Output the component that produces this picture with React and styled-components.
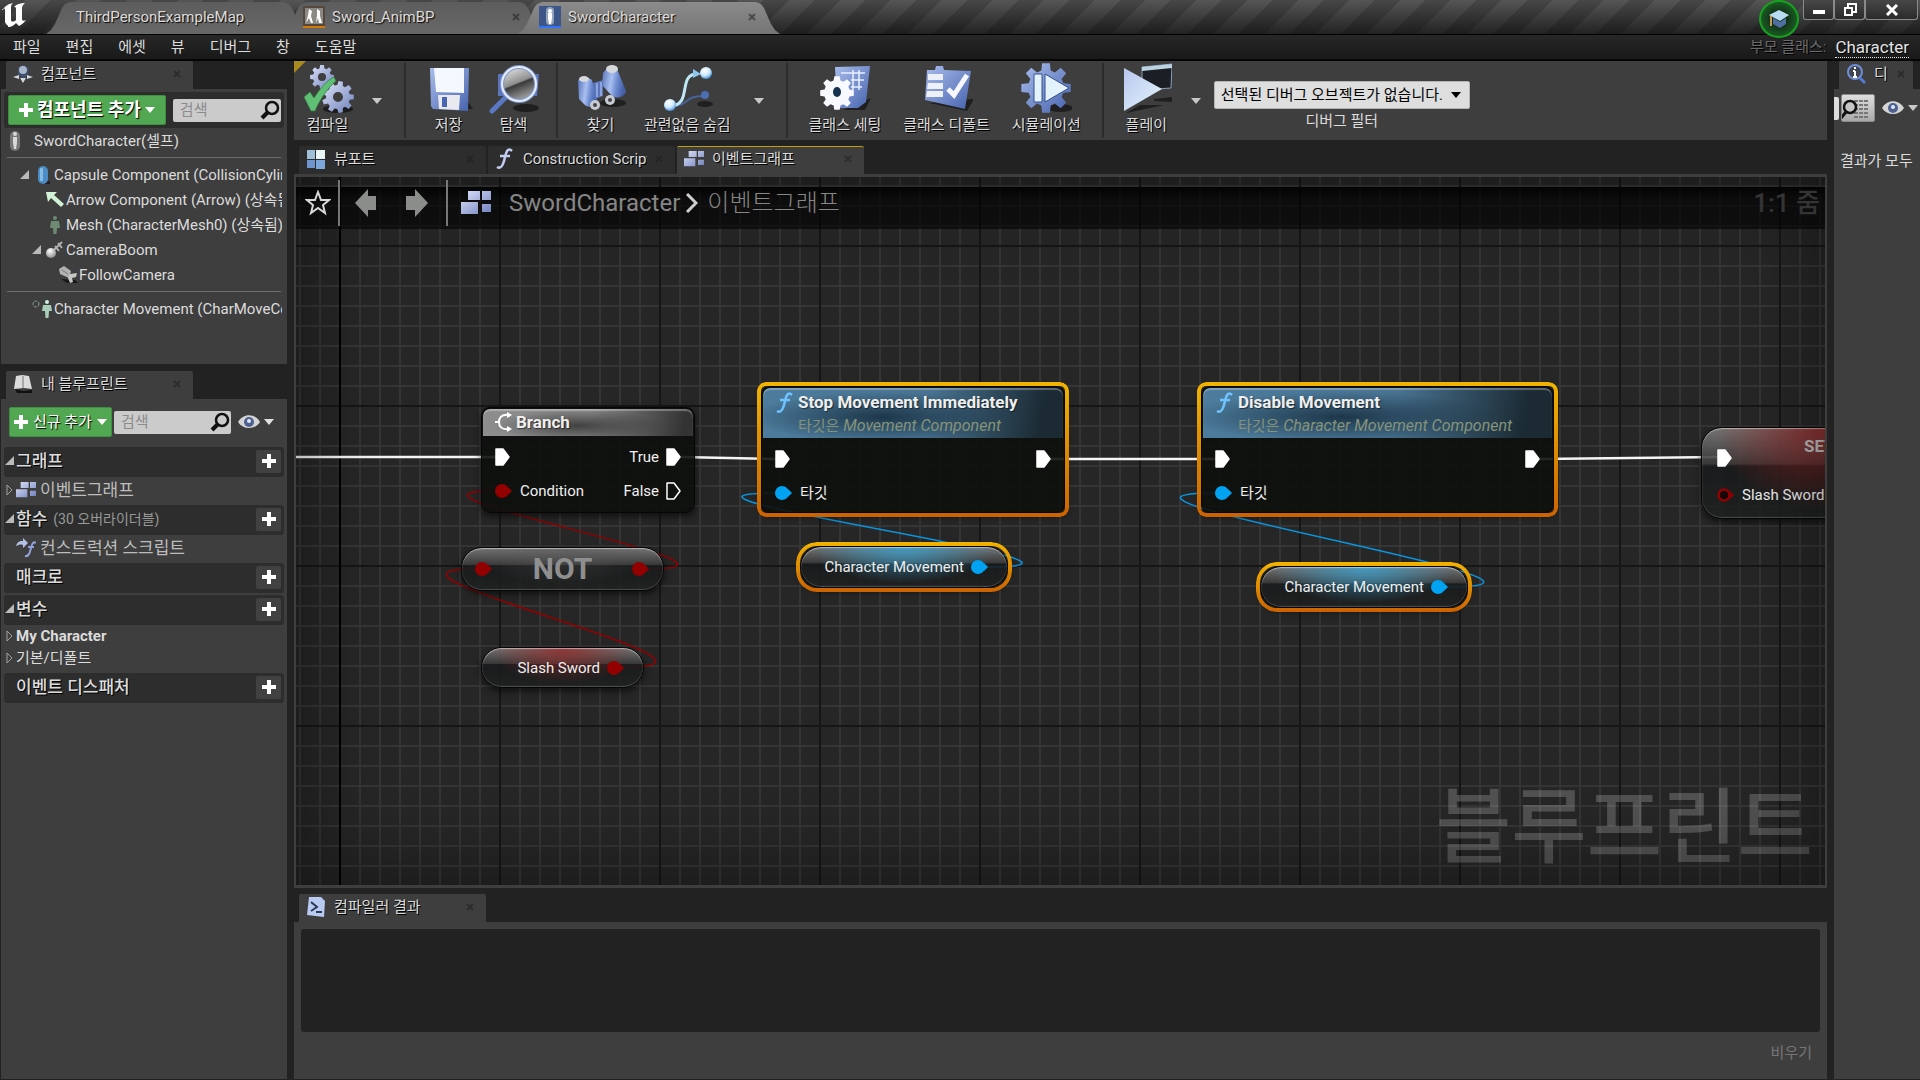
import styled, { createGlobalStyle } from "styled-components";

const GlobalStyle = createGlobalStyle`
  * {
    box-sizing: border-box;
  }

  body {
    margin: 0;
    background-color: #222222;
    color: #dcdcdc;
    font-family: Roboto, "Noto Sans CJK KR", sans-serif;
    font-size: 15px;
    line-height: 20px;
  }

  button, input, select {
    font: inherit;
    color: inherit;
    border: none;
    padding: 0;
    margin: 0;
    background: none;
  }

  svg {
    display: block;
    flex: none;
  }
`;

/* ---------- layout ---------- */

const Page = styled.div`
  height: 100vh;
  display: flex;
  flex-direction: column;
  overflow: hidden;
`;

const TitleBar = styled.header`
  height: 34px;
  flex: none;
  display: flex;
  align-items: flex-start;
  background: linear-gradient(rgba(0, 0, 0, 0), rgba(0, 0, 0, 0.6)),
    repeating-linear-gradient(135deg, #474747 0 18px, #555 18px 36px);
`;

const Logo = styled.div`
  width: 46px;
  padding: 2px 2px 0;
`;

const DocTab = styled.button`
  position: relative;
  z-index: ${(props) => props.$layer};
  width: 262px;
  height: 34px;
  margin-right: -26px;
  padding: 0 24px 0 ${(props) => (props.$plain ? 30 : 21)}px;
  display: flex;
  align-items: center;
  gap: 7px;
  text-shadow: 1px 1px 1px #000;
  background: ${(props) =>
    props.$active
      ? "linear-gradient(#8c8c8c, #757575)"
      : "linear-gradient(#5c5c5c, #686868)"};
  clip-path: polygon(
    0 100%,
    5px 30px,
    9px 24px,
    16px 8px,
    19px 4px,
    24px 2px,
    calc(100% - 24px) 2px,
    calc(100% - 19px) 4px,
    calc(100% - 16px) 8px,
    calc(100% - 9px) 24px,
    calc(100% - 5px) 30px,
    100% 100%
  );

  & > span {
    flex: 1;
    text-align: left;
  }
`;

const TitleActions = styled.div`
  margin-left: auto;
  display: flex;
  padding-right: 2px;
`;

const TutorialButton = styled.button`
  width: 40px;
  height: 38px;
  margin-right: 4px;
  display: grid;
  place-items: center;
  position: relative;
  z-index: 2;
  border-radius: 50%;
  border: 2px solid #17a31f;
  background: radial-gradient(#14301a 30%, #1c7a26);
`;

const WindowButton = styled.button`
  width: ${(props) => (props.$wide ? 53 : 31)}px;
  height: 20px;
  display: grid;
  place-items: center;
  border: 1px solid #8a8a8a;
  border-top: none;
  border-radius: 0 0 3px 3px;
  background: linear-gradient(#474747, #2b2b2b);
`;

const MenuBar = styled.nav`
  height: 27px;
  flex: none;
  display: flex;
  align-items: center;
  gap: 25px;
  padding: 0 11px 0 13px;
  border-top: 1px solid #000;
  border-bottom: 2px solid #050505;
  background: linear-gradient(#272727, #191919);
`;

const ParentClass = styled.span`
  margin-left: auto;
  display: flex;
  gap: 9px;
  color: #6a6a6a;
  text-shadow: 1px 1px #000;
`;

const ClassLink = styled.a`
  color: #e4e4e4;
  font-size: 17px;
  text-decoration: none;
  border-bottom: 1px dotted #e4e4e4;
`;

const Workspace = styled.div`
  flex: 1;
  min-height: 0;
  display: flex;
  gap: 7px;
  padding: 0 0 1px 1px;
`;

const Sidebar = styled.aside`
  width: ${(props) => props.$width}px;
  flex: none;
  display: flex;
  flex-direction: column;
`;

const Center = styled.main`
  flex: 1;
  min-width: 0;
  display: flex;
  flex-direction: column;
`;

const TabStrip = styled.div`
  display: flex;
  gap: 2px;
  padding: 0 5px;
  margin-top: ${(props) => props.$top || 0}px;
`;

const PanelTab = styled.button`
  width: ${(props) => (props.$narrow ? 74 : 187)}px;
  height: 28px;
  display: flex;
  align-items: center;
  gap: 8px;
  padding: 0 ${(props) => (props.$narrow ? 8 : 12)}px 3px 7px;
  border-radius: 2px 2px 0 0;
  border-top: 1px solid ${(props) => (props.$accent ? "#c0a010" : "transparent")};
  background-color: ${(props) => (props.$idle ? "#2d2d2d" : "#3e3e3e")};
  text-shadow: 1px 1px #000;
  white-space: nowrap;

  & > span {
    flex: 1;
    text-align: left;
    overflow: hidden;
  }
`;

const Panel = styled.section`
  background-color: #3e3e3e;
  padding: 3px 3px 0;
  overflow: hidden;
  height: ${(props) => (props.$height ? `${props.$height}px` : "auto")};
  flex: ${(props) => (props.$height ? "none" : 1)};
`;

/* ---------- side panels ---------- */

const PanelTools = styled.div`
  display: flex;
  align-items: center;
  gap: ${(props) => props.$gap}px;
  height: 36px;
  padding: 0 ${(props) => (props.$dark ? "3px 0 4px" : "5px")};
  border-radius: 3px;
  background-color: ${(props) => (props.$dark ? "#2d2d2d" : "transparent")};
  margin: ${(props) => (props.$dark ? "0" : "2px 0 7px")};
`;

const GreenButton = styled.button`
  height: 30px;
  padding: 0 ${(props) => (props.$large ? 10 : 4)}px;
  display: flex;
  align-items: center;
  gap: ${(props) => (props.$large ? 4 : 5)}px;
  flex: none;
  border: 1px solid #3f8f43;
  border-radius: 2px;
  background-color: #52a852;
  color: #fff;
  font-size: ${(props) => (props.$large ? 18 : 15)}px;
  font-weight: ${(props) => (props.$large ? 700 : 400)};
  text-shadow: 1px 1px 1px #000;
  white-space: nowrap;
`;

const SearchBox = styled.label`
  flex: 1;
  min-width: 0;
  height: 23px;
  display: flex;
  align-items: center;
  padding: 0 1px 0 7px;
  border-radius: 2px;
  background-color: #cbcbcb;

  & > input {
    flex: 1;
    width: 20px;
    min-width: 0;
    outline: none;
    color: #222;
  }

  & > input::placeholder {
    color: #8c8c8c;
  }
`;

const IconMenu = styled.button`
  display: flex;
  align-items: center;
  gap: 4px;
  padding: 0 5px;
  flex: none;
`;

const TreeRow = styled.div`
  height: 25px;
  display: flex;
  align-items: center;
  gap: ${(props) => props.$gap || 0}px;
  padding-left: ${(props) => props.$indent}px;
  margin-right: 2px;
  overflow: hidden;
  white-space: nowrap;
`;

const ArrowSlot = styled.span`
  width: 12px;
  flex: none;
`;

const IconSlot = styled.span`
  width: 22px;
  flex: none;
  display: grid;
  place-items: center;
`;

const Divider = styled.hr`
  border: none;
  height: 1px;
  margin: 4px 3px;
  background-color: #6c6c6c;
`;

const SectionHead = styled.div`
  height: 30px;
  margin-top: ${(props) => props.$top || 0}px;
  padding: 0 3px 2px 1px;
  display: flex;
  align-items: center;
  background-color: #2d2d2d;
  border-radius: 3px;
  font-size: 17px;
  font-weight: 500;
  text-shadow: 1px 1px #000;

  & > small {
    margin-left: 6px;
    color: #989898;
    font-size: 14px;
    font-weight: 400;
    text-shadow: none;
  }
`;

const AddButton = styled.button`
  width: 25px;
  height: 23px;
  margin-left: auto;
  display: grid;
  place-items: center;
  border-radius: 2px;
  background-color: #414141;
`;

const SectionRow = styled.div`
  height: ${(props) => (props.$category ? 22 : 28)}px;
  display: flex;
  align-items: center;
  padding: 0 0 ${(props) => (props.$category ? 0 : 3)}px 1px;
  font-size: ${(props) => (props.$category ? 15 : 17)}px;
  font-weight: ${(props) => (props.$bold ? 700 : 400)};
  color: ${(props) => (props.$category ? "#dcdcdc" : "#bdbdbd")};

  & > svg + span {
    margin-left: 4px;
  }
`;

const SectionArrow = styled.span`
  width: 11px;
  flex: none;
`;

const DetailsTools = styled.div`
  height: 32px;
  margin: 0 -3px;
  display: flex;
  align-items: center;
  gap: 2px;
`;

const SearchSliver = styled.span`
  width: 5px;
  height: 23px;
  flex: none;
  border-radius: 0 2px 2px 0;
  background-color: #dcdcdc;
`;

const MatrixButton = styled.button`
  width: 34px;
  height: 28px;
  flex: none;
  border: 1px solid #8b8b8b;
  border-radius: 2px;
  background: linear-gradient(#dedede, #a9a9a9);
`;

const NoResult = styled.p`
  margin: 27px 0 0 3px;
  white-space: nowrap;
  overflow: hidden;
`;

/* ---------- toolbar ---------- */

const Toolbar = styled.div`
  position: relative;
  height: 79px;
  flex: none;
  display: flex;
  align-items: stretch;
  background-color: #3e3e3e;
  padding: 2px 1px;

  &::before {
    content: "";
    position: absolute;
    left: 0;
    top: 0;
    border-top: 12px solid #a98a1c;
    border-right: 12px solid transparent;
  }
`;

const ToolButton = styled.button`
  min-width: 65px;
  padding: 0 11px;
  display: flex;
  flex-direction: column;
  align-items: center;
  text-shadow: 1px 1px #000;
  white-space: nowrap;

  & > svg {
    margin: 0 -11px;
  }
`;

const ToolArrow = styled.button`
  width: 34px;
  display: grid;
  place-items: center;
`;

const ToolSeparator = styled.span`
  width: 2px;
  margin: 0 10px;
  background-color: #2c2c2c;
`;

const DebugFilter = styled.label`
  display: flex;
  flex-direction: column;
  align-items: center;
  gap: 2px;
  padding: 18px 1px 0;
`;

const SelectWrap = styled.span`
  position: relative;

  & > select {
    appearance: none;
    width: 256px;
    height: 28px;
    padding: 0 22px 0 6px;
    border: 1px solid #b5b5b5;
    border-radius: 2px;
    background-color: #dedede;
    color: #000;
  }

  & > svg {
    position: absolute;
    right: 9px;
    top: 11px;
    pointer-events: none;
  }
`;

/* ---------- graph ---------- */

const GraphFrame = styled.div`
  flex: 1;
  min-height: 0;
  border: 2px solid #3e3e3e;
  border-width: 3px 2px;
`;

const Graph = styled.div`
  position: relative;
  height: 100%;
  overflow: hidden;
  background-color: #262626;
  background-image: linear-gradient(90deg, #000 2px, transparent 2px),
    linear-gradient(90deg, #161616 2px, transparent 2px),
    linear-gradient(#161616 2px, transparent 2px),
    linear-gradient(90deg, #353535 2px, transparent 2px),
    linear-gradient(#353535 2px, transparent 2px);
  background-size: 4000px 100%, 160px 160px, 160px 160px, 20px 20px, 20px 20px;
  background-position: 43px 0, 43px 68px, 43px 68px, 3px 8px, 3px 8px;

  &::after {
    content: "";
    position: absolute;
    inset: 0;
    pointer-events: none;
    box-shadow: inset 0 0 90px rgba(0, 0, 0, 0.45);
  }
`;

const GraphHeader = styled.div`
  position: absolute;
  z-index: 3;
  left: 0;
  right: 0;
  top: 10px;
  height: 42px;
  display: flex;
  align-items: center;
  padding: 0 0 11px 9px;
  background: linear-gradient(rgba(0, 0, 0, 0.9), rgba(0, 0, 0, 0.62) 12px);
  color: #868686;
  font-size: 24px;
  line-height: 30px;

  & > button {
    width: 51px;
    display: grid;
    place-items: center;
  }

  & > button:first-child {
    width: 24px;
  }
`;

const HeaderLine = styled.span`
  width: 2px;
  height: 46px;
  margin: 0 ${(props) => props.$after}px 0 ${(props) => props.$before}px;
  background-color: #777;
`;

const Crumb = styled.span`
  margin-left: ${(props) => props.$gap}px;
  font-weight: ${(props) => (props.$light ? 300 : 400)};
`;

const Zoom = styled.span`
  margin-left: auto;
  padding-right: 5px;
  color: #343434;
  font-size: 26px;
  font-weight: 500;
`;

const Watermark = styled.div`
  position: absolute;
  right: 12px;
  bottom: 11px;
  color: rgba(255, 255, 255, 0.2);
  font-size: 82px;
  line-height: 92px;
  font-weight: 500;
`;

const Wires = styled.svg`
  position: absolute;
  left: 0;
  top: 0;
  width: 100%;
  height: 100%;
`;

const ring = `
  &::before {
    content: "";
    position: absolute;
    inset: -5px;
    padding: 4px;
    border-radius: inherit;
    background: linear-gradient(#f2b400, #cc6200);
    mask: linear-gradient(#000 0 0) content-box exclude, linear-gradient(#000 0 0);
  }
`;

const Node = styled.article`
  position: absolute;
  left: ${(props) => props.$x}px;
  top: ${(props) => props.$y}px;
  width: ${(props) => props.$w}px;
  height: ${(props) => props.$h}px;
  padding: 1px;
  border: 1px solid #060606;
  border-radius: 9px;
  background-color: rgba(13, 16, 13, 0.9);
  color: #efefef;
  box-shadow: 0 3px 7px rgba(0, 0, 0, 0.6);
  ${(props) => props.$selected && ring}
`;

const headTints = {
  grey: `radial-gradient(ellipse 40% 60% at 45% 62%, rgba(40,40,40,.75), transparent),
    linear-gradient(100deg, #8d8d8d, #8a8a8a 50%, #333 95%)`,
  blue: `radial-gradient(ellipse 45% 50% at 40% 58%, rgba(24,48,66,.9), transparent),
    linear-gradient(100deg, #4d7c9c, #487290 55%, #1b2a33 92%)`,
};

const NodeHead = styled.header`
  height: ${(props) => (props.$tall ? 50 : 27)}px;
  padding: ${(props) => (props.$tall ? 4 : 3)}px 12px 0;
  display: grid;
  grid-template-columns: auto 1fr;
  align-content: start;
  column-gap: 3px;
  border-radius: 7px 7px 0 0;
  background: ${(props) => headTints[props.$tint]};
  box-shadow: inset 0 2px 1px rgba(255, 255, 255, 0.3);
  white-space: nowrap;

  & > strong {
    font-size: 17px;
    text-shadow: 1px 1px 1px rgba(0, 0, 0, 0.5);
  }
`;

const NodeSubtitle = styled.span`
  grid-column: 2;
  color: #84937a;
  line-height: 24px;

  & > em {
    font-size: 16px;
  }
`;

const PinRow = styled.div`
  height: ${(props) => (props.$exec ? 41 : 28)}px;
  display: flex;
  align-items: center;
  gap: 7px;
  padding: 0 12px;

  & > .out {
    margin-left: auto;
  }
`;

const Pill = styled.article`
  position: absolute;
  left: ${(props) => props.$x}px;
  top: ${(props) => props.$y}px;
  width: ${(props) => props.$w}px;
  height: ${(props) => props.$h}px;
  display: flex;
  align-items: center;
  justify-content: flex-end;
  gap: 7px;
  padding: 0 ${(props) => (props.$tight ? 13 : 18)}px;
  border: 1px solid #050505;
  border-radius: 21px;
  color: #efefef;
  background: radial-gradient(
      ellipse 45% 90% at 50% 0,
      ${(props) => props.$glow},
      transparent
    ),
    linear-gradient(
      rgba(120, 120, 120, 0.95),
      rgba(58, 58, 58, 0.9) 40%,
      rgba(24, 26, 27, 0.88) 42%,
      rgba(30, 32, 32, 0.85)
    );
  box-shadow: inset 0 1px 1px rgba(255, 255, 255, 0.5),
    inset 0 -1px 1px rgba(255, 255, 255, 0.2), 0 3px 7px rgba(0, 0, 0, 0.6);
  ${(props) => props.$selected && ring}
`;

const NotText = styled.span`
  flex: 1;
  text-align: center;
  color: #8f8f8f;
  font-size: 30px;
  font-weight: 700;
`;

const SetNode = styled(Pill)`
  display: block;
  padding: 0 3px;

  & > strong {
    display: block;
    height: 9px;
    padding: 9px 0 0 99px;
    font-size: 17px;
    line-height: 18px;
    color: #b9b9b9;
  }

  & > div:last-child {
    margin-top: 3px;
  }
`;

/* ---------- compiler results ---------- */

const Results = styled.section`
  height: 157px;
  flex: none;
  display: flex;
  flex-direction: column;
  align-items: flex-end;
  gap: 11px;
  padding: 7px;
  background-color: #3e3e3e;
`;

const ResultLog = styled.div`
  height: 103px;
  width: 100%;
  border-radius: 3px;
  background-color: #222;
`;

const ClearButton = styled.button`
  padding: 0 8px;
  color: #767676;
`;

/* ---------- icons ---------- */

function gear(cx, cy, outer, inner, teeth) {
  const step = (Math.PI * 2) / teeth;
  const points = [];
  for (let i = 0; i < teeth; i++) {
    [
      [-0.34, inner],
      [-0.2, outer],
      [0.2, outer],
      [0.34, inner],
    ].forEach(([offset, radius]) => {
      const angle = (i + offset) * step;
      points.push(
        `${(cx + Math.cos(angle) * radius).toFixed(1)} ${(
          cy +
          Math.sin(angle) * radius
        ).toFixed(1)}`
      );
    });
  }
  return `M${points.join("L")}Z`;
}

const HiddenSvg = styled.svg`
  position: absolute;
`;

function Gradients() {
  return (
    <HiddenSvg width="0" height="0" aria-hidden="true">
      <defs>
        <linearGradient id="steel" x1="0" y1="0" x2="1" y2="1">
          <stop offset="0" stopColor="#dfe5fb" />
          <stop offset="1" stopColor="#6f80bb" />
        </linearGradient>
        <linearGradient id="blue" x1="0" y1="0" x2="1" y2="1">
          <stop offset="0" stopColor="#a9bdec" />
          <stop offset="1" stopColor="#4763ae" />
        </linearGradient>
        <linearGradient id="barrel" x1="0" y1="0" x2="1" y2="0.2">
          <stop offset="0" stopColor="#5472b8" />
          <stop offset="0.45" stopColor="#a9c0f0" />
          <stop offset="0.7" stopColor="#6d8bd0" />
          <stop offset="1" stopColor="#4460a6" />
        </linearGradient>
        <linearGradient id="ice" x1="0" y1="0" x2="1" y2="1">
          <stop offset="0" stopColor="#b9c6ef" />
          <stop offset="1" stopColor="#e4f6fb" />
        </linearGradient>
        <linearGradient id="lens" x1="0" y1="0" x2="0.4" y2="1">
          <stop offset="0" stopColor="#f2f2f2" />
          <stop offset="0.55" stopColor="#8f8f8f" />
          <stop offset="0.6" stopColor="#3a3a3a" />
          <stop offset="1" stopColor="#9a9a9a" />
        </linearGradient>
        <radialGradient id="ball" cx="0.4" cy="0.3" r="0.7">
          <stop offset="0" stopColor="#fff" />
          <stop offset="0.6" stopColor="#c9e8ff" />
          <stop offset="1" stopColor="#4d8fd0" />
        </radialGradient>
        <radialGradient id="grey" cx="0.4" cy="0.3" r="0.8">
          <stop offset="0" stopColor="#fff" />
          <stop offset="1" stopColor="#808080" />
        </radialGradient>
      </defs>
    </HiddenSvg>
  );
}

const Tool = ({ children }) => (
  <svg width="52" height="52" viewBox="0 0 52 52" aria-hidden="true">
    {children}
  </svg>
);

const toolIcons = {
  compile: (
    <Tool>
      <ellipse cx="36" cy="46" rx="15" ry="4" fill="#1c1c1c" />
      <path
        fill="url(#steel)"
        fillRule="evenodd"
        d={gear(20, 14, 12, 9, 8) + "M24 14a4 4 0 1 0-8 0a4 4 0 1 0 8 0"}
      />
      <path
        fill="url(#steel)"
        fillRule="evenodd"
        d={gear(36, 34, 16, 12, 9) + "M41 34a5 5 0 1 0-10 0a5 5 0 1 0 10 0"}
      />
      <path
        d="M2 34l6-5 4 6C18 26 24 18 32 14l2 4C26 25 18 36 13 48h-4z"
        fill="#5fbf74"
        stroke="#357a45"
        strokeWidth=".7"
      />
    </Tool>
  ),
  save: (
    <Tool>
      <path d="M12 46h38l-4-6z" fill="#202020" />
      <path d="M7 5h39l-1 43-35-2-2-3z" fill="url(#blue)" />
      <path d="M11 5h30v25l-28-1z" fill="#f6f8ff" />
      <path d="M15 32h22l-1 15-20-1z" fill="#e9eaf0" />
      <path d="M19 34h5v10h-5z" fill="#4a66b3" />
    </Tool>
  ),
  browse: (
    <Tool>
      <ellipse cx="38" cy="45" rx="13" ry="4" fill="#1f1f1f" />
      <path d="M10 11h41l-2 22H10z" fill="#5c74ba" />
      <path d="M4 48L18 34" stroke="#5b78c4" strokeWidth="5" strokeLinecap="round" />
      <circle cx="31" cy="21" r="17" fill="url(#lens)" />
      <circle cx="31" cy="21" r="17" fill="none" stroke="#7f98d0" strokeWidth="4" />
      <circle cx="31" cy="21" r="17" fill="none" stroke="#e6edfb" strokeWidth="2" />
    </Tool>
  ),
  find: (
    <Tool>
      <ellipse cx="38" cy="40" rx="13" ry="4" fill="#1f1f1f" />
      <path d="M3 17c4-3 10-3 14 0l6 22c-4 6-11 6-14 2L4 36z" fill="url(#barrel)" />
      <path d="M28 10c3-5 9-7 14-4l9 22c-1 6-9 8-14 5L27 22z" fill="url(#barrel)" />
      <path d="M18 20l10-3v16l-8 3z" fill="#5b75b8" />
      <path d="M22 20v14M26 19v14" stroke="#9db4e8" strokeWidth="1.500" />
      <ellipse cx="9" cy="16" rx="5" ry="3" fill="#d7d8dc" />
      <ellipse cx="37" cy="6" rx="6" ry="4" fill="#d7d8dc" />
      <circle cx="20" cy="42" r="5" fill="#c9cbd3" />
      <circle cx="20" cy="42" r="2" fill="#444" />
      <circle cx="35" cy="37" r="5" fill="#c9cbd3" />
      <circle cx="35" cy="37" r="2" fill="#444" />
    </Tool>
  ),
  hide: (
    <Tool>
      <ellipse cx="44" cy="41" rx="8" ry="3" fill="#1f1f1f" />
      <path d="M12 43C28 43 22 33 43 33" fill="none" stroke="#476397" strokeWidth="2" />
      <path
        d="M9 43C32 43 16 11 36 11"
        fill="none"
        stroke="#bfe7f7"
        strokeWidth="3"
      />
      <path d="M32 6l8 5-8 4z" fill="#8fc6ee" />
      <circle cx="45" cy="10" r="6" fill="url(#ball)" />
      <circle cx="9" cy="42" r="6" fill="url(#ball)" />
      <circle cx="44" cy="32" r="4" fill="#4c6fb2" />
    </Tool>
  ),
  settings: (
    <Tool>
      <path d="M24 47h22l6-12z" fill="#1f1f1f" />
      <path d="M16 4l35-1-4 36-8 6H18z" fill="url(#blue)" />
      <path
        d="M22 10h24M32 17h13M32 24h11M34 7v20M40 7v20"
        stroke="#e8eefc"
        strokeWidth="1.500"
      />
      <path fill="#f8f9ff" d={gear(18, 30, 17, 13, 8)} />
      <ellipse cx="18" cy="29" rx="4" ry="5" fill="#17324f" />
    </Tool>
  ),
  defaults: (
    <Tool>
      <path d="M8 40l38 8 7-12z" fill="#1f1f1f" />
      <path d="M6 7h8l1-4h7l1 4 27 1-6 38-40-9z" fill="url(#blue)" />
      <path d="M7 11h15v6H7zM7 20h15v6H6zM6 28h16v6H5z" fill="#eef0f8" />
      <path d="M27 26l6 6L46 12" fill="none" stroke="#f6f7ff" strokeWidth="5" />
    </Tool>
  ),
  simulate: (
    <Tool>
      <ellipse cx="40" cy="45" rx="13" ry="4" fill="#1f1f1f" />
      <path d={gear(26, 25, 25, 18, 8)} fill="url(#blue)" />
      <path d="M14 11h8v28h-8z" fill="#e4f3fb" stroke="#35508f" />
      <path d="M25 11l24 14-24 14z" fill="#e4f3fb" stroke="#35508f" />
    </Tool>
  ),
  play: (
    <Tool>
      <path d="M6 50l38-8H20z" fill="#1f1f1f" />
      <path d="M34 36l18-2v5l-18-1z" fill="#1f1f1f" />
      <path d="M22 4l30-3-1 24-29 2z" fill="#1b1e24" stroke="#88a0b8" />
      <path d="M22 4l30-3v4L22 8z" fill="#bcd3e2" />
      <path d="M4 5l38 21L4 48z" fill="url(#ice)" />
    </Tool>
  ),
};

const DownArrow = ({ fill = "#c8c8c8" }) => (
  <svg width="10" height="6" viewBox="0 0 10 6" aria-hidden="true">
    <path d="M0 0h10L5 6z" fill={fill} />
  </svg>
);

const OpenArrow = () => (
  <svg width="10" height="10" viewBox="0 0 10 10" aria-hidden="true">
    <path d="M9 0v9H0z" fill="#b9b9b9" />
  </svg>
);

const ClosedArrow = () => (
  <svg width="10" height="12" viewBox="0 0 10 12" aria-hidden="true">
    <path d="M2 1v10L7 6z" fill="none" stroke="#a0a0a0" />
  </svg>
);

const Plus = () => (
  <svg width="14" height="14" viewBox="0 0 14 14" aria-hidden="true">
    <path d="M5 0h4v5h5v4H9v5H5V9H0V5h5z" fill="#fff" />
  </svg>
);

const CloseMark = () => (
  <svg width="8" height="8" viewBox="0 0 8 8" aria-hidden="true">
    <path d="M1 1l6 6M7 1L1 7" stroke="#1f1f1f" strokeWidth="2" opacity=".55" />
  </svg>
);

const SearchIcon = () => (
  <svg width="20" height="20" viewBox="0 0 20 20" aria-hidden="true">
    <circle cx="12" cy="8" r="6" fill="none" stroke="#111" strokeWidth="2.500" />
    <path d="M8 12l-6 6" stroke="#111" strokeWidth="4" />
  </svg>
);

const Eye = () => (
  <svg width="22" height="14" viewBox="0 0 22 14" aria-hidden="true">
    <path d="M0 7C5-2 17-2 22 7C17 15 5 15 0 7z" fill="#d5d5d5" />
    <circle cx="11" cy="7" r="5" fill="#4d6291" />
    <circle cx="11" cy="6" r="2" fill="#dfe8fa" />
  </svg>
);

const GraphIcon = ({ size = 20 }) => (
  <svg width={size} height={size * 0.8} viewBox="0 0 30 24" aria-hidden="true">
    <path
      d="M7 0h12v9H7zM21 0h9v9h-9zM0 11h17v12H0zM21 13h9v8h-9z"
      fill="url(#steel)"
    />
  </svg>
);

const FunctionIcon = ({ color = "#c3cdf2" }) => (
  <svg width="20" height="22" viewBox="0 0 20 22" aria-hidden="true">
    <path
      d="M17 3C13-1 11 4 10 9S7 22 2 19M5 8h10"
      fill="none"
      stroke={color}
      strokeWidth="2.500"
    />
  </svg>
);

const ViewportIcon = () => (
  <svg width="20" height="19" viewBox="0 0 20 19" aria-hidden="true">
    <path d="M1 0h8v9H1z" fill="#9fc0d8" />
    <path d="M10 0h9v9h-9z" fill="#e9f6f4" />
    <path d="M1 10h8v8H1z" fill="#6f93cf" />
    <path d="M10 10h9v9h-9z" fill="#7fa5dd" />
  </svg>
);

const ComponentsIcon = () => (
  <svg width="20" height="20" viewBox="0 0 20 20" aria-hidden="true">
    <path d="M5 3l6-2 5 3-1 8-5 2-5-3z" fill="#3f4f6c" />
    <circle cx="10" cy="6" r="4" fill="#a9b5c9" />
    <path d="M0 13l6-2v4zM20 13l-6-2v4zM7 14h6l-3 5z" fill="#d2d6dd" />
  </svg>
);

const BookIcon = () => (
  <svg width="20" height="20" viewBox="0 0 20 20" aria-hidden="true">
    <path d="M2 15l8 2 9-1v3H4z" fill="#111" />
    <path d="M3 2l6-1 7 1 3 13-8-1-10 1z" fill="#dcdcdc" />
    <path d="M10 2v12" stroke="#777" />
  </svg>
);

const InfoIcon = () => (
  <svg width="20" height="20" viewBox="0 0 20 20" aria-hidden="true">
    <path d="M13 13l6 6" stroke="#5579d0" strokeWidth="3" />
    <circle cx="9" cy="8" r="7" fill="#40464f" stroke="#6f8ed6" strokeWidth="2" />
    <path d="M9 3v2M9 7v6M7 7h2M7 13h4" stroke="#fff" strokeWidth="2" />
  </svg>
);

const CompilerIcon = () => (
  <svg width="20" height="20" viewBox="0 0 20 20" aria-hidden="true">
    <path d="M3 0h12l4 4-1 16-17-2z" fill="#b9cbf2" />
    <path d="M5 5l6 5-6 4M10 15h6" fill="none" stroke="#2b3a55" strokeWidth="2" />
  </svg>
);

const Figure = ({ color = "#d9d9d9", pod }) => (
  <svg width="16" height="20" viewBox="0 0 16 20" aria-hidden="true">
    {pod && <rect x="3" y="0" width="10" height="20" rx="5" fill="#777" />}
    <circle cx="8" cy="3" r="2" fill={color} />
    <path
      d={pod ? "M6 6h4v6l-1 6H7l-1-6z" : "M4 6h8l1 7h-3l-.5 6h-3L6 13H3z"}
      fill={color}
    />
  </svg>
);

const treeIcons = {
  self: <Figure pod />,
  capsule: (
    <svg width="16" height="20" viewBox="0 0 16 20" aria-hidden="true">
      <path d="M6 16h9v3H6z" fill="#1f1f1f" />
      <rect x="3" y="1" width="10" height="18" rx="5" fill="#4d8cc4" />
      <rect x="5" y="3" width="3" height="13" rx="1" fill="#86bbe2" />
    </svg>
  ),
  arrow: (
    <svg width="20" height="18" viewBox="0 0 20 18" aria-hidden="true">
      <path d="M1 1h11l-3 3 10 9-3 3-10-9-3 4z" fill="#d3f2d5" />
    </svg>
  ),
  mesh: <Figure color="#6f8a74" />,
  boom: (
    <svg width="18" height="18" viewBox="0 0 18 18" aria-hidden="true">
      <path d="M8 9l8-8M9 5l4 5M12 2l4 5" stroke="#b0b0b0" strokeWidth="2" />
      <circle cx="5" cy="12" r="5" fill="url(#grey)" />
    </svg>
  ),
  camera: (
    <svg width="20" height="18" viewBox="0 0 20 18" aria-hidden="true">
      <path d="M3 13l14 1 3 3H9z" fill="#181818" />
      <path d="M1 3l5-3 7 5-2 7-9-4z" fill="#b2b2b2" />
      <path d="M12 8l7-1-1 4-4 1 1 4-3 1-2-5z" fill="#c6c6c6" />
      <path d="M4 4l6 4" stroke="#777" />
    </svg>
  ),
  movement: (
    <svg width="22" height="20" viewBox="0 0 22 20" aria-hidden="true">
      <circle cx="4" cy="5" r="3" fill="none" stroke="#8da092" strokeDasharray="3 1" />
      <circle cx="15" cy="3" r="2" fill="#cfeedd" />
      <path d="M11 6h8l1 6h-3l-.5 7h-3L13 12h-3z" fill="#a9cdb9" />
    </svg>
  ),
};

const ExecPin = ({ hollow, className }) => (
  <svg className={className} width="15" height="18" viewBox="0 0 15 18" aria-hidden="true">
    <path
      d="M1 1h7l6 8-6 8H1z"
      fill={hollow ? "none" : "#fff"}
      stroke="#fff"
      strokeWidth="1.500"
      strokeLinejoin="round"
    />
  </svg>
);

const DataPin = ({ color, hollow }) => (
  <svg width="18" height="14" viewBox="0 0 18 14" aria-hidden="true">
    <path d="M13 3l4 4-4 4z" fill={color} />
    <circle
      cx="7"
      cy="7"
      r={hollow ? 5.500 : 7}
      fill={hollow ? "#150808" : color}
      stroke={hollow ? color : "none"}
      strokeWidth="2.500"
    />
  </svg>
);

/* ---------- data ---------- */

const RED = "#920000";
const BLUE = "#00a2f2";

const menus = ["파일", "편집", "에셋", "뷰", "디버그", "창", "도움말"];

const components = [
  { icon: "capsule", text: "Capsule Component (CollisionCylinder)", indent: 16, open: true },
  { icon: "arrow", text: "Arrow Component (Arrow) (상속됨)", indent: 28 },
  { icon: "mesh", text: "Mesh (CharacterMesh0) (상속됨)", indent: 28 },
  { icon: "boom", text: "CameraBoom", indent: 28, open: true },
  { icon: "camera", text: "FollowCamera", indent: 41 },
];

function SearchField({ label }) {
  return (
    <SearchBox>
      <input type="text" placeholder="검색" aria-label={label} />
      <SearchIcon />
    </SearchBox>
  );
}

function ComponentRow({ icon, text, indent, open }) {
  return (
    <TreeRow $indent={indent}>
      <ArrowSlot>{open && <OpenArrow />}</ArrowSlot>
      <IconSlot>{treeIcons[icon]}</IconSlot>
      <span>{text}</span>
    </TreeRow>
  );
}

function Section({ title, note, open, top }) {
  return (
    <SectionHead $top={top}>
      <SectionArrow>{open && <OpenArrow />}</SectionArrow>
      {title}
      {note && <small>{note}</small>}
      <AddButton aria-label={`${title} 추가`}>
        <Plus />
      </AddButton>
    </SectionHead>
  );
}

function ToolItem({ icon, label }) {
  return (
    <ToolButton>
      {toolIcons[icon]}
      {label}
    </ToolButton>
  );
}

function FunctionNode({ x, width, title, target }) {
  return (
    <Node $x={x} $y={209} $w={width} $h={127} $selected>
      <NodeHead $tall $tint="blue">
        <FunctionIcon color="#6fc3ff" />
        <strong>{title}</strong>
        <NodeSubtitle>
          타깃은 <em>{target}</em>
        </NodeSubtitle>
      </NodeHead>
      <PinRow $exec>
        <ExecPin />
        <ExecPin className="out" />
      </PinRow>
      <PinRow>
        <DataPin color={BLUE} />
        <span>타깃</span>
      </PinRow>
    </Node>
  );
}

function VariableNode({ x, y }) {
  return (
    <Pill $x={x} $y={y} $w={208} $h={42} $glow="rgba(60, 160, 205, .85)" $selected>
      <span>Character Movement</span>
      <DataPin color={BLUE} />
    </Pill>
  );
}

function EventGraph() {
  return (
    <Graph>
      <Wires aria-hidden="true">
        <g fill="none" stroke="#f5f5f5" strokeWidth="2.500">
          <path d="M0 280H200" />
          <path d="M385 280L480 282" />
          <path d="M754 282H920" />
          <path d="M1244 282L1424 280" />
        </g>
        <g fill="none" stroke={RED} strokeWidth="1.500">
          <path d="M350 392C500 392 60 314 199 314" />
          <path d="M328 490C478 490 37 392 179 392" />
        </g>
        <g fill="none" stroke="#0b93dd" strokeWidth="1.500">
          <path d="M690 390C871 390 305 316 480 316" />
          <path d="M1150 410C1341 410 735 316 920 316" />
        </g>
      </Wires>

      <Node $x={185} $y={230} $w={214} $h={106}>
        <NodeHead $tint="grey">
          <svg width="18" height="20" viewBox="0 0 18 20" aria-hidden="true">
            <path
              d="M0 10h4M14 3C6 2 4 6 4 10s2 8 10 7"
              fill="none"
              stroke="#fff"
              strokeWidth="2"
            />
            <path d="M12 0l5 3-5 3zM12 14l5 3-5 3z" fill="#fff" />
          </svg>
          <strong>Branch</strong>
        </NodeHead>
        <PinRow $exec>
          <ExecPin />
          <span className="out">True</span>
          <ExecPin />
        </PinRow>
        <PinRow>
          <DataPin color={RED} />
          <span>Condition</span>
          <span className="out">False</span>
          <ExecPin hollow />
        </PinRow>
      </Node>

      <Pill $x={165} $y={370} $w={203} $h={44} $glow="rgba(90, 90, 90, .5)" $tight>
        <DataPin color={RED} />
        <NotText>NOT</NotText>
        <DataPin color={RED} />
      </Pill>
      <Pill $x={185} $y={470} $w={163} $h={41} $glow="rgba(150, 40, 40, .8)">
        <span>Slash Sword</span>
        <DataPin color={RED} />
      </Pill>

      <FunctionNode
        x={465}
        width={304}
        title="Stop Movement Immediately"
        target="Movement Component"
      />
      <VariableNode x={504} y={369} />
      <FunctionNode
        x={905}
        width={353}
        title="Disable Movement"
        target="Character Movement Component"
      />
      <VariableNode x={964} y={389} />

      <SetNode $x={1405} $y={250} $w={240} $h={92} $glow="rgba(140, 35, 35, .85)">
        <strong>SET</strong>
        <PinRow $exec>
          <ExecPin />
        </PinRow>
        <PinRow>
          <DataPin color={RED} hollow />
          <span>Slash Sword</span>
        </PinRow>
      </SetNode>

      <Watermark>블루프린트</Watermark>

      <GraphHeader>
        <button aria-label="즐겨찾기">
          <svg width="26" height="26" viewBox="0 0 26 26" aria-hidden="true">
            <path
              d="M13 2l3 8h8l-6 5 2 8-7-5-7 5 2-8-6-5h8z"
              fill="none"
              stroke="#d8d8d8"
              strokeWidth="2"
            />
          </svg>
        </button>
        <HeaderLine $before={9} $after={0} />
        <button aria-label="뒤로">
          <svg width="22" height="28" viewBox="0 0 22 28" aria-hidden="true">
            <path d="M0 14L13 0v7h8v14h-8v7z" fill="#8b8d8b" />
          </svg>
        </button>
        <button aria-label="앞으로">
          <svg width="22" height="28" viewBox="0 0 22 28" aria-hidden="true">
            <path d="M22 14L9 0v7H0v14h9v7z" fill="#8b8d8b" />
          </svg>
        </button>
        <HeaderLine $before={4} $after={13} />
        <GraphIcon size={30} />
        <Crumb $gap={18}>SwordCharacter</Crumb>
        <Crumb $gap={6}>
          <svg width="12" height="20" viewBox="0 0 12 20" aria-hidden="true">
            <path d="M1 1l9 9-9 9" fill="none" stroke="#cfcfcf" strokeWidth="3" />
          </svg>
        </Crumb>
        <Crumb $gap={9} $light>
          이벤트그래프
        </Crumb>
        <Zoom>1:1 줌</Zoom>
      </GraphHeader>
    </Graph>
  );
}

function App() {
  return (
    <Page>
      <GlobalStyle />
      <Gradients />
      <TitleBar>
        <Logo>
          <svg width="26" height="26" viewBox="0 0 26 26" aria-label="Unreal Engine">
            <path
              d="M1 8C3 4 6 2 11 1C9 3 9 4 9 6v12c0 2 3 2 5 0V7c0-2-1-2-2-2c3-3 6-4 11-4c-2 2-3 3-3 5v11c0 2 2 2 4 1c-2 3-5 5-7 6l-3-3c-2 2-4 4-8 4c1-2-3-2-3-6V8c0-2-2-2-3 0z"
              fill="#fff"
            />
          </svg>
        </Logo>
        <DocTab $layer={2} $plain>
          <span>ThirdPersonExampleMap</span>
        </DocTab>
        <DocTab $layer={1}>
          <svg width="22" height="22" viewBox="0 0 22 22" aria-hidden="true">
            <path d="M0 0h22v20H0z" fill="#54473b" />
            <path d="M2 2h18v16H2z" fill="#8c8883" />
            <path
              d="M6 3l3 2-1 5 2 7H8l-2-5-3 5 2-8zM14 3l3 2v5l2 7h-3l-1-5-2 5 1-8z"
              fill="#fff"
            />
            <path d="M0 20h22v2H0z" fill="#d17a0a" />
          </svg>
          <span>Sword_AnimBP</span>
          <CloseMark />
        </DocTab>
        <DocTab $layer={3} $active>
          <svg width="22" height="22" viewBox="0 0 22 22" aria-hidden="true">
            <path d="M0 0h22v20H0z" fill="#3c5687" />
            <rect x="7" y="1" width="8" height="18" rx="4" fill="#93a2bd" />
            <circle cx="11" cy="5" r="2" fill="#fff" />
            <path d="M9 7h4v5l-1 6h-2l-1-6z" fill="#fff" />
            <path d="M0 20h22v2H0z" fill="#2f75ff" />
          </svg>
          <span>SwordCharacter</span>
          <CloseMark />
        </DocTab>
        <TitleActions>
          <TutorialButton aria-label="튜토리얼">
            <svg width="22" height="22" viewBox="0 0 22 22" aria-hidden="true">
              <path d="M5 10l7 4 6-4v6l-6 4-7-4z" fill="#4e6f9f" />
              <path d="M1 7l10-5 10 5-9 6z" fill="#b8dcf2" />
              <path d="M3 8v10" stroke="#c19a58" strokeWidth="2" />
            </svg>
          </TutorialButton>
          <WindowButton aria-label="최소화">
            <svg width="14" height="12" viewBox="0 0 14 12" aria-hidden="true">
              <path d="M1 6h12v4H1z" fill="#fff" />
            </svg>
          </WindowButton>
          <WindowButton aria-label="복원">
            <svg width="14" height="14" viewBox="0 0 14 14" aria-hidden="true">
              <path
                d="M2 5h7v7H2zM5 4V1h8v8h-3"
                fill="none"
                stroke="#fff"
                strokeWidth="2"
              />
            </svg>
          </WindowButton>
          <WindowButton $wide aria-label="닫기">
            <svg width="14" height="12" viewBox="0 0 14 12" aria-hidden="true">
              <path d="M2 1l10 10M12 1L2 11" stroke="#fff" strokeWidth="3" />
            </svg>
          </WindowButton>
        </TitleActions>
      </TitleBar>

      <MenuBar>
        {menus.map((menu) => (
          <button key={menu}>{menu}</button>
        ))}
        <ParentClass>
          부모 클래스:
          <ClassLink href="#character">Character</ClassLink>
        </ParentClass>
      </MenuBar>

      <Workspace>
        <Sidebar $width={286}>
          <TabStrip>
            <PanelTab>
              <ComponentsIcon />
              <span>컴포넌트</span>
              <CloseMark />
            </PanelTab>
          </TabStrip>
          <Panel $height={275}>
            <PanelTools $dark $gap={7}>
              <GreenButton $large>
                <Plus />
                컴포넌트 추가
                <DownArrow fill="#fff" />
              </GreenButton>
              <SearchField label="컴포넌트 검색" />
            </PanelTools>
            <TreeRow $indent={0} $gap={8}>
              <IconSlot>{treeIcons.self}</IconSlot>
              <span>SwordCharacter(셀프)</span>
            </TreeRow>
            <Divider />
            {components.map((item) => (
              <ComponentRow key={item.text} {...item} />
            ))}
            <Divider />
            <ComponentRow
              icon="movement"
              text="Character Movement (CharMoveComp)"
              indent={16}
            />
          </Panel>

          <TabStrip $top={7}>
            <PanelTab>
              <BookIcon />
              <span>내 블루프린트</span>
              <CloseMark />
            </PanelTab>
          </TabStrip>
          <Panel>
            <PanelTools $gap={2}>
              <GreenButton>
                <Plus />
                신규 추가
                <DownArrow fill="#fff" />
              </GreenButton>
              <SearchField label="블루프린트 검색" />
              <IconMenu aria-label="보기 옵션">
                <Eye />
                <DownArrow fill="#e0e0e0" />
              </IconMenu>
            </PanelTools>
            <Section title="그래프" open />
            <SectionRow>
              <SectionArrow>
                <ClosedArrow />
              </SectionArrow>
              <GraphIcon />
              <span>이벤트그래프</span>
            </SectionRow>
            <Section title="함수" note="(30 오버라이더블)" open />
            <SectionRow>
              <SectionArrow />
              <svg width="20" height="20" viewBox="0 0 20 20" aria-hidden="true">
                <path d="M0 8C2 3 4 3 7 3V0l5 5-5 5V7C4 6 3 7 0 8z" fill="#b4c0e6" />
                <path
                  d="M20 5c-3-2-4 1-5 5s-2 9-6 8M12 9h6"
                  fill="none"
                  stroke="#8fa2dd"
                  strokeWidth="2"
                />
              </svg>
              <span>컨스트럭션 스크립트</span>
            </SectionRow>
            <Section title="매크로" />
            <Section title="변수" top={2} open />
            <SectionRow $category $bold>
              <SectionArrow>
                <ClosedArrow />
              </SectionArrow>
              My Character
            </SectionRow>
            <SectionRow $category>
              <SectionArrow>
                <ClosedArrow />
              </SectionArrow>
              기본/디폴트
            </SectionRow>
            <Section title="이벤트 디스패처" top={4} />
          </Panel>
        </Sidebar>

        <Center>
          <Toolbar>
            <ToolItem icon="compile" label="컴파일" />
            <ToolArrow aria-label="컴파일 옵션">
              <DownArrow />
            </ToolArrow>
            <ToolSeparator />
            <ToolItem icon="save" label="저장" />
            <ToolItem icon="browse" label="탐색" />
            <ToolSeparator />
            <ToolItem icon="find" label="찾기" />
            <ToolItem icon="hide" label="관련없음 숨김" />
            <ToolArrow aria-label="숨김 옵션">
              <DownArrow />
            </ToolArrow>
            <ToolSeparator />
            <ToolItem icon="settings" label="클래스 세팅" />
            <ToolItem icon="defaults" label="클래스 디폴트" />
            <ToolItem icon="simulate" label="시뮬레이션" />
            <ToolSeparator />
            <ToolItem icon="play" label="플레이" />
            <ToolArrow aria-label="플레이 옵션">
              <DownArrow />
            </ToolArrow>
            <DebugFilter>
              <SelectWrap>
                <select>
                  <option>선택된 디버그 오브젝트가 없습니다.</option>
                </select>
                <DownArrow fill="#000" />
              </SelectWrap>
              디버그 필터
            </DebugFilter>
          </Toolbar>

          <TabStrip $top={6}>
            <PanelTab $idle>
              <ViewportIcon />
              <span>뷰포트</span>
              <CloseMark />
            </PanelTab>
            <PanelTab $idle>
              <FunctionIcon />
              <span>Construction Script</span>
              <CloseMark />
            </PanelTab>
            <PanelTab $accent>
              <GraphIcon />
              <span>이벤트그래프</span>
              <CloseMark />
            </PanelTab>
          </TabStrip>
          <GraphFrame>
            <EventGraph />
          </GraphFrame>

          <TabStrip $top={6}>
            <PanelTab>
              <CompilerIcon />
              <span>컴파일러 결과</span>
              <CloseMark />
            </PanelTab>
          </TabStrip>
          <Results>
            <ResultLog />
            <ClearButton>비우기</ClearButton>
          </Results>
        </Center>

        <Sidebar $width={86}>
          <TabStrip>
            <PanelTab $narrow>
              <InfoIcon />
              <span>디</span>
              <CloseMark />
            </PanelTab>
          </TabStrip>
          <Panel>
            <DetailsTools>
              <SearchSliver />
              <MatrixButton aria-label="속성 매트릭스">
                <svg width="32" height="26" viewBox="0 0 32 26" aria-hidden="true">
                  <path
                    d="M12 6h14M12 10h14M12 14h14M12 18h14M12 22h14"
                    stroke="#777"
                    strokeWidth="2"
                    strokeDasharray="4 1"
                  />
                  <circle cx="8" cy="12" r="6" fill="#c5c5c5" stroke="#111" strokeWidth="2.500" />
                  <path d="M4 17l-5 6" stroke="#111" strokeWidth="3" />
                </svg>
              </MatrixButton>
              <IconMenu aria-label="보기 옵션">
                <Eye />
                <DownArrow />
              </IconMenu>
            </DetailsTools>
            <NoResult>결과가 모두</NoResult>
          </Panel>
        </Sidebar>
      </Workspace>
    </Page>
  );
}

export default App;
